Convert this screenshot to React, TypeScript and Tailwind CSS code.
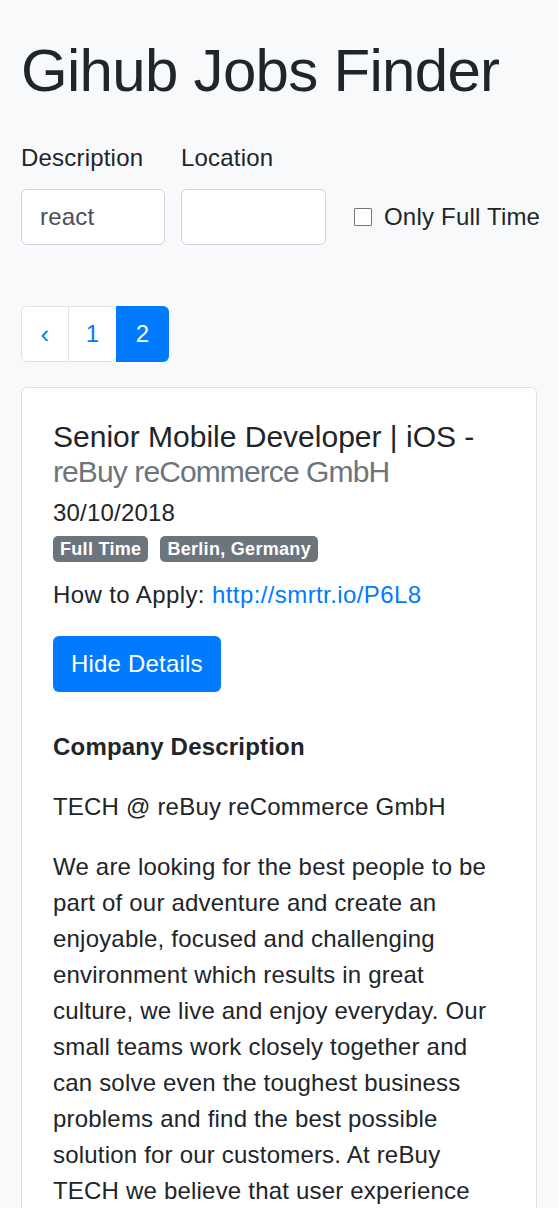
import React from "react";

export default function App() {
  return (
    <div className="min-h-[1208px] bg-[#f8f9fa] text-[#212529] font-['Liberation_Sans',Arial,sans-serif] tracking-[0.2px]">
      <div className="px-[21px] pt-[35px]">
        <h1 className="text-[60px] leading-[72px] font-normal tracking-[-0.7px] text-[#212529]">Gihub Jobs Finder</h1>

        <form className="mt-[33px] flex items-end">
          <div className="flex shrink-0 flex-col">
            <label className="text-[24px] leading-[36px]">Description</label>
            <input
              defaultValue="react"
              className="mt-[13px] w-[144px] h-[56px] rounded-[6px] border border-[#ced4da] bg-white px-[18px] text-[24px] text-[#495057] outline-none"
            />
          </div>
          <div className="ml-[16px] flex shrink-0 flex-col">
            <label className="text-[24px] leading-[36px]">Location</label>
            <input className="mt-[13px] w-[145px] h-[56px] rounded-[6px] border border-[#ced4da] bg-white px-[18px] text-[24px] text-[#495057] outline-none" />
          </div>
          <label className="ml-[28px] flex h-[56px] shrink-0 items-center whitespace-nowrap">
            <span className="block w-[18px] h-[18px] border border-[#767676] bg-white rounded-[1px]"></span>
            <span className="ml-[12px] text-[24px] leading-[36px]">Only Full Time</span>
          </label>
        </form>

        <nav className="mt-[61px] flex">
          <div className="flex h-[56px] rounded-[6px] border border-[#dee2e6] overflow-hidden">
            <span className="flex w-[47px] items-center justify-center bg-white text-[26px] text-[#007bff] border-r border-[#dee2e6]">‹</span>
            <span className="flex w-[47px] items-center justify-center bg-white text-[24px] text-[#007bff]">1</span>
          </div>
          <span className="-ml-[1px] flex h-[56px] w-[53px] items-center justify-center rounded-r-[6px] bg-[#007bff] text-[24px] text-white">2</span>
        </nav>

        <div className="mt-[25px] rounded-[6px] border border-[rgba(0,0,0,0.125)] bg-white px-[31px] pt-[31px] pb-[40px]">
          <h5 className="text-[30px] leading-[35px] font-normal tracking-[0px]">
            Senior Mobile Developer | iOS - <span className="text-[#6c757d] font-light tracking-[-0.9px]">reBuy reCommerce GmbH</span>
          </h5>
          <div className="mt-[9px] text-[24px] leading-[29px] font-medium">30/10/2018</div>
          <div className="mt-[9px] flex gap-[12px]">
            <span className="inline-flex h-[26px] items-center rounded-[5px] bg-[#6c757d] px-[7px] text-[18px] font-bold text-white tracking-[0.3px]">Full Time</span>
            <span className="inline-flex h-[26px] items-center rounded-[5px] bg-[#6c757d] px-[7px] text-[18px] font-bold text-white tracking-[0.3px]">Berlin, Germany</span>
          </div>
          <div className="mt-[15px] text-[24px] leading-[36px] tracking-[0.4px]">
            How to Apply: <a className="text-[#007bff]">http://smrtr.io/P6L8</a>
          </div>
          <button className="mt-[23px] h-[56px] rounded-[6px] bg-[#007bff] px-[18px] text-[24px] text-white">Hide Details</button>
          <div className="mt-[37px] text-[24px] leading-[36px]">
            <p className="font-bold">Company Description</p>
            <p className="mt-[24px]">TECH @ reBuy reCommerce GmbH</p>
            <p className="mt-[24px] pr-[12px]">
              We are looking for the best people to be part of our adventure and create an enjoyable, focused and challenging environment which results in great culture, we live and enjoy everyday. Our small teams work closely together and can solve even the toughest business problems and find the best possible solution for our customers. At reBuy TECH we believe that user experience is the key to success and we are always looking for new ways to improve it.
            </p>
          </div>
        </div>
      </div>
    </div>
  );
}
